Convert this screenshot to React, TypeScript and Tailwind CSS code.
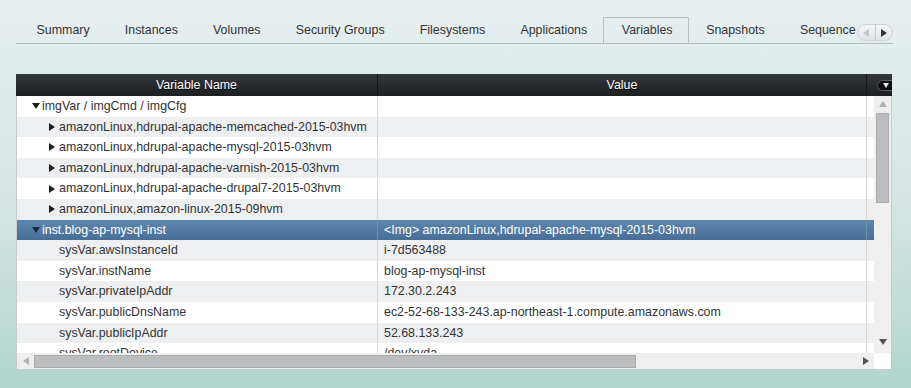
import React from "react";

type Row = {
  name: string;
  value?: string;
  level: 0 | 1;
  toggle?: "down" | "right";
  selected?: boolean;
};

const tabs = [
  "Summary",
  "Instances",
  "Volumes",
  "Security Groups",
  "Filesystems",
  "Applications",
  "Variables",
  "Snapshots",
  "Sequence",
];

const rows: Row[] = [
  { name: "imgVar / imgCmd / imgCfg", level: 0, toggle: "down" },
  { name: "amazonLinux,hdrupal-apache-memcached-2015-03hvm", level: 1, toggle: "right" },
  { name: "amazonLinux,hdrupal-apache-mysql-2015-03hvm", level: 1, toggle: "right" },
  { name: "amazonLinux,hdrupal-apache-varnish-2015-03hvm", level: 1, toggle: "right" },
  { name: "amazonLinux,hdrupal-apache-drupal7-2015-03hvm", level: 1, toggle: "right" },
  { name: "amazonLinux,amazon-linux-2015-09hvm", level: 1, toggle: "right" },
  {
    name: "inst.blog-ap-mysql-inst",
    level: 0,
    toggle: "down",
    selected: true,
    value: "<Img> amazonLinux,hdrupal-apache-mysql-2015-03hvm",
  },
  { name: "sysVar.awsInstanceId", level: 1, value: "i-7d563488" },
  { name: "sysVar.instName", level: 1, value: "blog-ap-mysql-inst" },
  { name: "sysVar.privateIpAddr", level: 1, value: "172.30.2.243" },
  {
    name: "sysVar.publicDnsName",
    level: 1,
    value: "ec2-52-68-133-243.ap-northeast-1.compute.amazonaws.com",
  },
  { name: "sysVar.publicIpAddr", level: 1, value: "52.68.133.243" },
  { name: "sysVar.rootDevice", level: 1, value: "/dev/xvda" },
];

function Triangle({ dir, color = "#222", size = 8 }: { dir: "down" | "right" | "up" | "left"; color?: string; size?: number }) {
  const long = size;
  const short = Math.round(size * 0.75);
  const vertical = dir === "down" || dir === "up";
  const w = vertical ? long : short;
  const h = vertical ? short : long;
  const pts = {
    down: `0,0 ${w},0 ${w / 2},${h}`,
    up: `0,${h} ${w},${h} ${w / 2},0`,
    right: `0,0 ${w},${h / 2} 0,${h}`,
    left: `${w},0 0,${h / 2} ${w},${h}`,
  }[dir];
  return (
    <svg width={w} height={h} viewBox={`0 0 ${w} ${h}`} className="shrink-0">
      <polygon points={pts} fill={color} />
    </svg>
  );
}

function TreeRow({ row, index }: { row: Row; index: number }) {
  const bg = row.selected
    ? "bg-gradient-to-b from-[#5d87ae] to-[#486e96] text-white"
    : index % 2 === 0
      ? "bg-white text-[#333]"
      : "bg-[#eeeff1] text-[#333]";
  return (
    <div className={`flex h-[20.6px] shrink-0 items-center ${bg}`}>
      <div
        className={`flex h-full w-[361px] shrink-0 items-center border-r ${
          row.selected ? "border-[#6f8fae]" : "border-[#d5d6d8]"
        } ${row.level === 0 ? "pl-[15px]" : "pl-[32px]"}`}
      >
        <span className="flex w-[10px] shrink-0 items-center">
          {row.toggle && <Triangle dir={row.toggle} color={row.selected ? "#1a2a3a" : "#1e1e1e"} />}
        </span>
        <span className="whitespace-nowrap">{row.name}</span>
      </div>
      <div
        className={`flex h-full w-[489px] shrink-0 items-center border-r pl-[6px] ${
          row.selected ? "border-[#6f8fae]" : "border-[#d5d6d8]"
        }`}
      >
        <span className="whitespace-nowrap">{row.value}</span>
      </div>
      <div className="h-full flex-1" />
    </div>
  );
}

export default function App() {
  return (
    <div className="relative h-[388px] w-[911px] overflow-hidden bg-gradient-to-b from-[#e8eff1] via-[#d6e6e5] to-[#b2d5ce] font-['Liberation_Sans',Arial,sans-serif] text-[12.4px] text-[#333]">
      {/* Tab strip */}
      <div className="relative ml-[16px] mt-[17px] h-[27px] w-[877px] border-b border-[#b7bcbf]">
        <div className="flex h-[26px] w-[841px] overflow-hidden pl-[3px]">
          {tabs.map((t) => (
            <div
              key={t}
              className={`flex h-[27px] shrink-0 items-center whitespace-nowrap pb-[1px] ${
                t === "Variables"
                  ? "ml-[-2px] border border-b-0 border-[#b9bec1] bg-[#e5ecee] pl-[18px] pr-[15px] text-[#2d3a4a]"
                  : "px-[17.6px] text-[#333]"
              }`}
            >
              {t}
            </div>
          ))}
        </div>
        {/* scroll arrows */}
        <div className="absolute right-0 top-[7px] flex h-[17px] w-[36px] overflow-hidden rounded-full border border-[#cdd2d4] bg-gradient-to-b from-[#f4f6f7] to-[#dfe4e6]">
          <div className="flex flex-1 items-center justify-center border-r border-[#c9cdd0]">
            <Triangle dir="left" color="#c4c8cb" />
          </div>
          <div className="flex flex-1 items-center justify-center">
            <Triangle dir="right" color="#333" />
          </div>
        </div>
      </div>

      {/* Table */}
      <div className="ml-[16px] mt-[30px] w-[876px]">
        {/* Header */}
        <div className="flex h-[22px] overflow-hidden bg-gradient-to-b from-[#34373a] to-[#1d1f21] text-white [text-shadow:0_1px_0_#000]">
          <div className="flex w-[362px] shrink-0 items-center justify-center border-r border-[#141516]">
            Variable Name
          </div>
          <div className="flex w-[489px] shrink-0 items-center justify-center border-r border-[#141516]">
            Value
          </div>
          <div className="relative flex-1">
            <div className="absolute left-[10px] top-[6px] flex h-[11px] w-[22px] items-center rounded-full border border-[#5a5d60] bg-[#0e0f10] pl-[5px]">
              <Triangle dir="down" color="#e8e8e8" size={6} />
            </div>
          </div>
        </div>

        {/* Body */}
        <div className="border-b border-l border-r border-[#c6cacb] bg-white">
          <div className="flex h-[257px]">
            <div className="flex flex-1 flex-col overflow-hidden">
              {rows.map((r, i) => (
                <TreeRow key={r.name} row={r} index={i} />
              ))}
            </div>
            {/* vertical scrollbar */}
            <div className="flex w-[17px] shrink-0 flex-col items-center bg-[#efefef]">
              <div className="flex h-[16px] items-center justify-center">
                <Triangle dir="up" color="#b0b3b6" />
              </div>
              <div className="mt-[1px] h-[90px] w-[13px] border border-[#a9abad] bg-[#bcbdbf]" />
              <div className="flex-1" />
              <div className="mb-[6px] flex h-[10px] items-center justify-center">
                <Triangle dir="down" color="#505254" />
              </div>
            </div>
          </div>
          {/* horizontal scrollbar */}
          <div className="flex h-[16px]">
            <div className="flex flex-1 items-center bg-[#efefef]">
              <div className="flex w-[17px] justify-center">
                <Triangle dir="left" color="#b0b3b6" />
              </div>
              <div className="h-[13px] w-[602px] border border-[#a9abad] bg-[#bcbdbf]" />
              <div className="flex-1" />
              <div className="mr-[5px] flex">
                <Triangle dir="right" color="#505254" />
              </div>
            </div>
            <div className="w-[17px] bg-white" />
          </div>
        </div>
      </div>
    </div>
  );
}
